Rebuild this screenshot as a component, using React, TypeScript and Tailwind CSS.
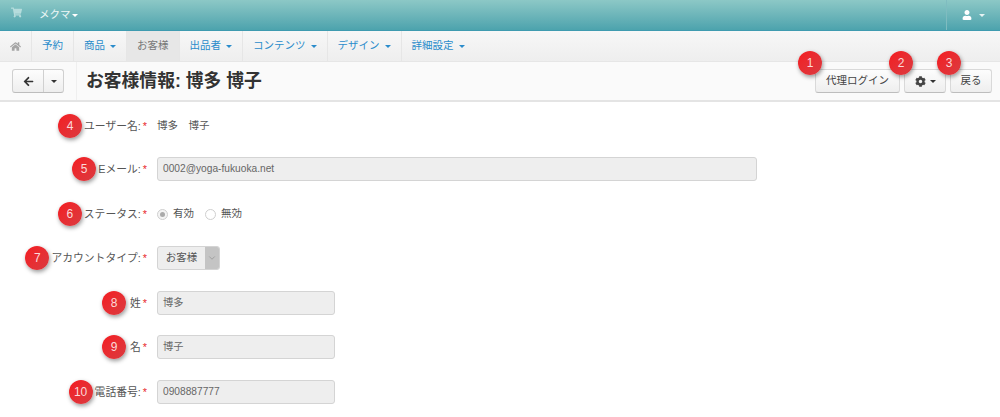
import { ChevronDown } from "lucide-react";
import { FaHome, FaShoppingCart, FaArrowLeft, FaCog, FaUser } from "react-icons/fa";

const font = "font-['Liberation_Sans','Noto_Sans_CJK_JP',sans-serif]";

function Caret({ className = "" }: { className?: string }) {
  return <span className={"inline-block w-0 h-0 border-x-[3px] border-x-transparent border-t-[3px] " + className} />;
}

function Badge({ n, className = "" }: { n: number; className?: string }) {
  return (
    <span className={"flex h-[24px] w-[24px] shrink-0 items-center justify-center rounded-full bg-gradient-to-br from-[#f4191f] to-[#da3a40] text-[12px] text-[#fbdada] shadow-[1px_2px_4px_rgba(0,0,0,0.4)] " + className}>
      {n}
    </span>
  );
}

function NavItem({ label, caret, active, last }: { label: string; caret?: boolean; active?: boolean; last?: boolean }) {
  return (
    <div className={"flex h-full items-center gap-[5px] px-[10px] " + (last ? "" : "border-r border-[#e6e6e6] ") + (active ? "bg-[#e7e7e7] text-[#777]" : "text-[#2a8ccb]")}>
      <span>{label}</span>
      {caret && <Caret className="border-t-[#2a8ccb]" />}
    </div>
  );
}

function Row({ label, n, children, badgeGap = "mr-[2px]" }: { label: string; n: number; children: React.ReactNode; badgeGap?: string }) {
  return (
    <div className="flex h-[24px] items-center">
      <div className="flex w-[147px] shrink-0 items-center justify-end text-[10.8px] text-[#555]">
        <Badge n={n} className={badgeGap} />
        <span>{label}</span>
        <span className="ml-[2px] text-[#e8262c]">*</span>
      </div>
      <div className="ml-[10px] flex items-center text-[10.5px] text-[#555]">{children}</div>
    </div>
  );
}

function Input({ value, w }: { value: string; w: string }) {
  return (
    <div className={"flex h-[24px] items-center rounded-[3px] border border-[#d4d4d4] bg-[#eeeeee] px-[5px] text-[10.2px] text-[#666] " + w}>
      {value}
    </div>
  );
}

function Btn({ children, className = "" }: { children: React.ReactNode; className?: string }) {
  return (
    <div className={"flex h-[24px] items-center justify-center rounded-[3px] border border-[#d9d9d9] border-b-[#bdbdbd] bg-gradient-to-b from-[#fdfdfd] to-[#eeeeee] text-[10.5px] text-[#444] " + className}>
      {children}
    </div>
  );
}

export default function App() {
  return (
    <div className={"relative h-[417px] w-[1000px] overflow-hidden bg-white " + font}>
      {/* top bar */}
      <div className="flex h-[31px] items-stretch border-b border-[#3f9bb0] bg-gradient-to-b from-[#8cc8c6] to-[#4ca3ad] text-white">
        <div className="flex w-[39px] items-start pl-[11px] pt-[7px] text-[#b5dcdc]">
          <FaShoppingCart size={11} />
        </div>
        <div className="flex items-center gap-[1px] text-[10.5px] text-[#eef7f7]">
          メクマ
          <Caret className="border-t-white" />
        </div>
        <div className="ml-auto flex w-[54px] items-center justify-center gap-[7px] border-l border-[#7fbcc0]">
          <FaUser size={10} />
          <Caret className="border-t-[#e6f3f3]" />
        </div>
      </div>

      {/* nav */}
      <div className="flex h-[31px] items-center border-b border-[#e6e6e6] bg-gradient-to-b from-[#f7f7f7] to-[#eeeeee] text-[10.5px]">
        <div className="flex h-full w-[32px] items-center justify-center border-r border-[#e6e6e6] text-[#a5a5a5]">
          <FaHome size={11} />
        </div>
        <NavItem label="予約" />
        <NavItem label="商品" caret />
        <NavItem label="お客様" active />
        <NavItem label="出品者" caret />
        <NavItem label="コンテンツ" caret />
        <NavItem label="デザイン" caret />
        <NavItem label="詳細設定" caret last />
      </div>

      {/* title bar */}
      <div className="flex h-[40px] items-center border-b-[2px] border-[#e4e4e4] bg-[#fafafa] pl-[12px] pr-[8px]">
        <div className="flex h-[24px] w-[52px] overflow-hidden rounded-[3px] border border-[#d0d0d0] border-b-[#bdbdbd] bg-gradient-to-b from-[#fdfdfd] to-[#eeeeee]">
          <div className="flex w-[31px] items-center justify-center border-r border-[#d0d0d0] text-[#333]">
            <FaArrowLeft size={11} />
          </div>
          <div className="flex flex-1 items-center justify-center">
            <Caret className="border-t-[#333]" />
          </div>
        </div>
        <div className="ml-[12px] flex h-full items-center border-l border-[#efefef] pl-[9px] text-[17.8px] font-bold text-[#333]">
          お客様情報: 博多 博子
        </div>
        <div className="ml-auto flex items-center gap-[4px]">
          <Btn className="relative w-[85px]">
            代理ログイン
            <Badge n={1} className="absolute left-[-18px] top-[-19px]" />
          </Btn>
          <Btn className="relative w-[42px] gap-[4px]">
            <FaCog size={11} />
            <Caret className="border-t-[#333]" />
            <Badge n={2} className="absolute left-[-16px] top-[-19px]" />
          </Btn>
          <Btn className="relative w-[42px]">
            戻る
            <Badge n={3} className="absolute left-[-14px] top-[-19px]" />
          </Btn>
        </div>
      </div>

      {/* form */}
      <div className="flex flex-col pt-[12px]">
        <Row label="ユーザー名:" n={4}>博多　博子</Row>
        <div className="h-[19px]" />
        <Row label="Eメール:" n={5}><Input value="0002@yoga-fukuoka.net" w="w-[600px]" /></Row>
        <div className="h-[21px]" />
        <Row label="ステータス:" n={6}>
          <span className="mr-[5px] flex h-[11px] w-[11px] items-center justify-center rounded-full border border-[#cfcfcf] bg-[#f4f4f4]">
            <span className="h-[5px] w-[5px] rounded-full bg-[#aaa]" />
          </span>
          有効
          <span className="ml-[11px] mr-[5px] h-[11px] w-[11px] rounded-full border border-[#cfcfcf] bg-white" />
          無効
        </Row>
        <div className="h-[20px]" />
        <Row label="アカウントタイプ:" n={7}>
          <div className="flex h-[24px] w-[63px] overflow-hidden rounded-[3px] border border-[#d4d4d4] bg-[#eeeeee] text-[#555]">
            <div className="flex flex-1 items-center justify-center">お客様</div>
            <div className="flex w-[14px] items-center justify-center bg-[#c4c4c4] text-[#999]">
              <ChevronDown size={10} />
            </div>
          </div>
        </Row>
        <div className="h-[21px]" />
        <Row label="姓" n={8} badgeGap="mr-[4px]"><Input value="博多" w="w-[178px]" /></Row>
        <div className="h-[20px]" />
        <Row label="名" n={9} badgeGap="mr-[4px]"><Input value="博子" w="w-[178px]" /></Row>
        <div className="h-[21px]" />
        <Row label="電話番号:" n={10}><Input value="0908887777" w="w-[178px]" /></Row>
      </div>
    </div>
  );
}
